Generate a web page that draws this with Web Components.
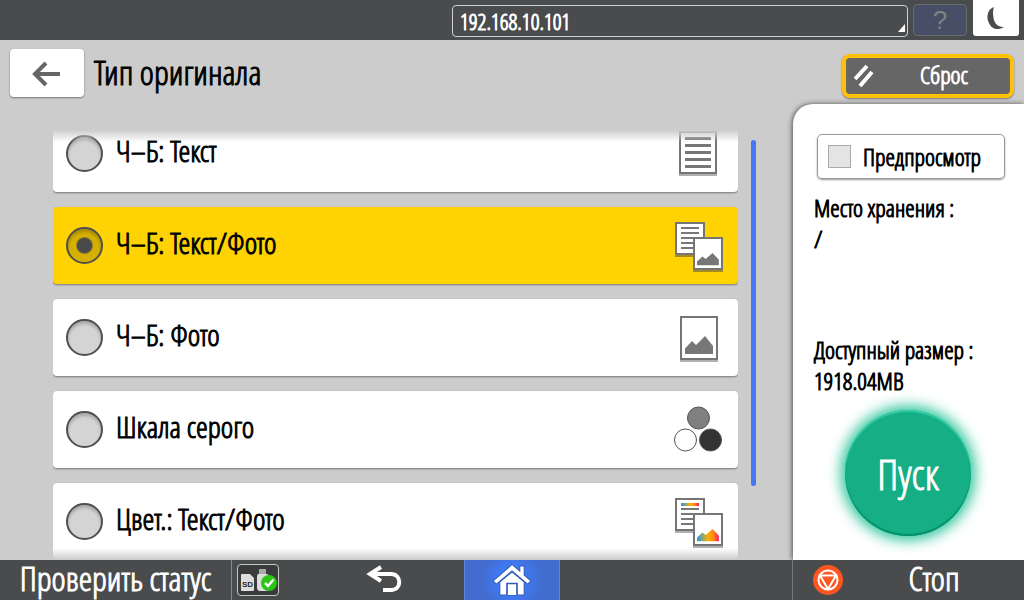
<!DOCTYPE html>
<html lang="ru">
<head>
<meta charset="utf-8">
<title>Тип оригинала</title>
<style>
  html, body { margin: 0; height: 100%; }
  body {
    --bar: #4a4b4d;
    --text-s: 24px;
    --text-m: 30px;
    --text-l: 34px;
    background: #ccc;
    color: #000;
    font-family: "Open Sans Condensed Light", "Open Sans Condensed", "Noto Sans", sans-serif;
    font-size: var(--text-s);
    -webkit-text-stroke: 1px currentColor;
    overflow: hidden;
  }
</style>
</head>
<body>
<scan-screen></scan-screen>

<template id="scan-screen">
  <style>
    :host { display: grid; grid-template-rows: 40px minmax(0, 1fr) 40px; height: 100vh; }
    .work { display: grid; grid-template-columns: minmax(0, 1fr) 231px; min-height: 0; }
    .main, .side { display: flex; flex-direction: column; min-height: 0; }
    original-list, job-panel { flex: 1; min-height: 0; }
  </style>
  <top-bar></top-bar>
  <div class="work">
    <main class="main">
      <page-title>Тип оригинала</page-title>
      <original-list></original-list>
    </main>
    <aside class="side">
      <reset-button>Сброс</reset-button>
      <job-panel></job-panel>
    </aside>
  </div>
  <bottom-bar></bottom-bar>
</template>

<template id="top-bar">
  <style>
    :host { display: flex; justify-content: flex-end; align-items: flex-start; gap: 5px; padding-right: 5px; background: var(--bar); }
    .address { position: relative; width: 456px; height: 32px; margin-top: 4px; }
    select {
      appearance: none; box-sizing: border-box; width: 100%; height: 100%; margin: 0; padding: 0 7px 4px;
      border: 1px solid #d0d0d0; border-radius: 4px; background: transparent; color: #fff;
      font-family: inherit; font-size: 22px;
    }
    option { color: #000; }
    .corner { position: absolute; right: 3px; bottom: 4px; width: 7px; height: 8px; background: #fff; clip-path: polygon(100% 0, 100% 100%, 0 100%); pointer-events: none; }
    button { box-sizing: border-box; padding: 0; font-family: inherit; }
    .help { width: 54px; height: 32px; margin-top: 4px; border: 1px solid #6a6c70; border-radius: 4px; background: #474f66; color: #808184; font-family: "Liberation Sans", sans-serif; font-size: 26px; line-height: 30px; -webkit-text-stroke: 0; }
    .sleep { width: 46px; height: 36px; margin-left: 1px; border: 0; border-radius: 0 0 3px 3px; background: #fff; }
    svg { display: block; margin: 0 auto; }
  </style>
  <div class="address">
    <select aria-label="Адрес"><option>192.168.10.101</option></select>
    <span class="corner"></span>
  </div>
  <button class="help" aria-label="Справка">?</button>
  <button class="sleep" aria-label="Сон"><svg width="46" height="36" viewBox="0 0 46 36"><path d="M21 7C15 9 13 16 15.500 22C18 29 24 31 31 27C25 27.500 21.500 23.500 20.500 18C19.800 13.500 19.800 10 21 7Z" fill="#4a4b4d"/></svg></button>
</template>

<template id="page-title">
  <style>
    :host { display: flex; align-items: flex-start; gap: 10px; box-sizing: border-box; height: 90px; padding: 9px 10px 0; }
    button { flex: none; width: 74px; height: 48px; padding: 0; border: 0; border-radius: 4px; background: #fff; box-shadow: 0 1px 2px #777; }
    h1 { margin: 0; font-size: var(--text-l); font-weight: normal; line-height: 46px; }
    svg { display: block; margin: 0 auto; }
  </style>
  <button aria-label="Назад"><svg width="74" height="48" viewBox="0 0 74 48" fill="none" stroke="#666" stroke-width="4"><path d="M50 25H26M36 14L25 25L36 36"/></svg></button>
  <h1><slot></slot></h1>
</template>

<template id="original-list">
  <style>
    :host { display: grid; grid-template-columns: minmax(0, 1fr) 6px; column-gap: 13px; padding: 0 36px 0 53px; }
    .frame { position: relative; min-height: 0; display: flex; }
    .frame::before, .frame::after { content: ""; position: absolute; left: 0; right: 0; height: 12px; pointer-events: none; z-index: 1; }
    .frame::before { top: 0; background: linear-gradient(#ccc, #cccccc00); }
    .frame::after { bottom: 0; background: linear-gradient(#cccccc00, #ccc); }
    .scroller { flex: 1; overflow-y: auto; scrollbar-width: none; display: flex; flex-direction: column; gap: 15px; }
    label { flex: none; display: flex; align-items: center; gap: 13px; box-sizing: border-box; height: 77px; padding: 0 11px 0 13px; border-radius: 4px; background: #fff; box-shadow: 0 1px 2px #777; font-size: var(--text-m); }
    label:has(:checked) { background: #ffd203; }
    label span { flex: 1; line-height: 36px; padding-bottom: 5px; }
    input { appearance: none; flex: none; box-sizing: border-box; width: 37px; height: 37px; margin: 0; border: 2px solid #4f4f4f; border-radius: 50%; background: #d4d4d4; box-shadow: inset 0 3px 3px #0003; }
    input:checked { background: radial-gradient(circle, #4a4a4a 7px, #d6b000 9px); }
    .thumb { margin: 10px 1px 74px 0; border-radius: 3px; background: #4478f5; }
  </style>
  <div class="frame">
    <div class="scroller" role="radiogroup" aria-label="Тип оригинала">
      <label><input type="radio" name="type"><span>Ч–Б: Текст</span><kind-icon kind="text"></kind-icon></label>
      <label><input type="radio" name="type" checked><span>Ч–Б: Текст/Фото</span><kind-icon kind="mixed"></kind-icon></label>
      <label><input type="radio" name="type"><span>Ч–Б: Фото</span><kind-icon kind="photo"></kind-icon></label>
      <label><input type="radio" name="type"><span>Шкала серого</span><kind-icon kind="gray"></kind-icon></label>
      <label><input type="radio" name="type"><span>Цвет.: Текст/Фото</span><kind-icon kind="color"></kind-icon></label>
    </div>
  </div>
  <div class="thumb"></div>
</template>

<template id="reset-button">
  <style>
    :host { display: block; padding: 14px 10px 6px 49px; }
    button { display: flex; align-items: center; box-sizing: border-box; width: 100%; height: 44px; padding: 0 8px; border: 4px solid #ffc107; border-radius: 8px; background: #666; box-shadow: 0 1px 2px #777; color: #fff; font-family: inherit; font-size: var(--text-s); line-height: 32px; }
    span { flex: 1; padding: 0 8px 2px 20px; }
  </style>
  <button><svg width="20" height="24" viewBox="0 0 20 24" stroke="#fff" stroke-width="4"><path d="M1 15L13 2M6 22L18 8"/></svg><span><slot></slot></span></button>
</template>

<template id="job-panel">
  <style>
    :host { display: flex; flex-direction: column; box-sizing: border-box; padding: 30px 19px 24px 21px; border-radius: 20px 0 0 0; background: #fff; box-shadow: -1px 0 5px #555; }
    label { display: flex; align-items: center; gap: 12px; box-sizing: border-box; height: 45px; margin-left: 3px; padding: 0 10px; border: 1px solid #999; border-radius: 5px; box-shadow: 0 1px 2px #999; }
    input { appearance: none; box-sizing: border-box; width: 23px; height: 23px; margin: 0; border: 1px solid #aaa; background: #e4e4e4; }
    dl { margin: 13px 0 0; line-height: 31px; }
    dd { margin: 0; }
    dd + dt { margin-top: 80px; }
    button { flex: none; width: 126px; height: 126px; margin: auto 0 0 31px; padding: 0; border: 0; border-radius: 50%; background: #15ae85; box-shadow: inset 0 2px 1px #36cba5, inset 0 -2px 1px #008e68, 0 0 14px 4px #26c397; color: #fff; font-family: inherit; font-size: 42px; }
  </style>
  <label><input type="checkbox">Предпросмотр</label>
  <dl>
    <dt>Место хранения :</dt><dd>/</dd>
    <dt>Доступный размер :</dt><dd>1918.04MB</dd>
  </dl>
  <button>Пуск</button>
</template>

<template id="bottom-bar">
  <style>
    :host { display: grid; grid-template-columns: 232px minmax(0, 1fr) 96px minmax(0, 1fr) 232px; background: var(--bar); }
    button { display: block; box-sizing: border-box; height: 40px; margin: 0; padding: 0; border: 0; background: none; color: #fff; font-family: inherit; font-size: var(--text-l); line-height: 36px; }
    svg { display: block; margin: 0 auto; }
    .status { padding-bottom: 4px; border-right: 1px solid #88898b; }
    .tools { display: flex; align-items: center; justify-content: space-between; padding-left: 5px; }
    .media { width: 42px; height: 32px; border: 1px solid #c8c8c8; border-radius: 4px; background: #393c3a; }
    .back { width: 160px; }
    .home { background: radial-gradient(circle, #3f7cff 20%, #426cce 60%); border: 1px solid #5f86dd; border-width: 0 1px; }
    .stop { grid-column: 5; display: flex; align-items: center; border-left: 1px solid #77787a; padding: 0 14px 0 19px; }
    .stop span { flex: 1; padding: 0 0 4px 14px; }
    .stop svg { margin: 0; }
  </style>
  <button class="status">Проверить статус</button>
  <div class="tools">
    <button class="media" aria-label="Носители"><svg width="40" height="30" viewBox="0 0 40 30">
      <path d="M4 9H12L16 13V25Q16 26 15 26H4Q3 26 3 25V10Q3 9 4 9Z" fill="#ddd"/>
      <text x="4" y="22" font-family="Liberation Sans, sans-serif" font-size="8" font-weight="bold" fill="#222" style="-webkit-text-stroke: 0">SD</text>
      <path d="M21 4H28V9H21Z" fill="#aaa"/><path d="M20 9H29Q32 10 32 13V22Q32 26 28 26H22Q19 26 19 22V12Q19 10 20 9Z" fill="#ddd"/>
      <circle cx="31" cy="18" r="8" fill="#29c414"/><path d="M27 18L30 21L35.500 14.500" fill="none" stroke="#fff" stroke-width="2.500"/>
    </svg></button>
    <button class="back" aria-label="Вернуться"><svg width="36" height="30" viewBox="0 0 36 30" fill="none" stroke="#fff" stroke-width="4"><path d="M4 9H25C36 9 36 25 25 25H17M15 2L4 9L15 16"/></svg></button>
  </div>
  <button class="home" aria-label="Домой"><svg width="40" height="34" viewBox="0 0 36 34" preserveAspectRatio="none">
    <path d="M7 19L18 9L29 19V32H7Z" fill="#fff" stroke="#305cba" stroke-width="1"/>
    <path d="M18 1.500L25 8V3H29V12L35 18L32 21L18 8L4 21L1 18Z" fill="#fff" stroke="#305cba" stroke-width="1"/>
    <path d="M13.500 32V20.500H22.500V32" fill="#fff" stroke="#305cba" stroke-width="1.500"/>
  </svg></button>
  <button class="stop"><svg width="32" height="32" viewBox="0 0 32 32"><circle cx="16" cy="16" r="15" fill="#fd5621"/><g fill="none" stroke="#fff" stroke-width="2"><circle cx="16" cy="16" r="9.500"/><path d="M8 11.500H24L16 25Z"/></g></svg><span>Стоп</span></button>
</template>

<script>
  function define(name) {
    customElements.define(name, class extends HTMLElement {
      constructor() {
        super();
        this.attachShadow({ mode: "open" }).append(document.getElementById(name).content.cloneNode(true));
      }
    });
  }

  const hill = "M0 18V12.500L7 5L11 9L20 0L28 10V18Z";
  const page = (x, y, w, h, shade = "#b0b0b0") =>
    `<rect x="${x}" y="${y + 2}" width="${w}" height="${h}" fill="${shade}"/><rect x="${x + 1}" y="${y + 1}" width="${w - 2}" height="${h - 2}" fill="#fff" stroke="#757575" stroke-width="2"/>`;
  const lines = (x, y, w, count, step, height) =>
    Array.from({ length: count }, (_, i) => `<rect x="${x}" y="${y + i * step}" width="${w}" height="${height}" fill="#777"/>`).join("");
  const pair = (fill, first, shade) => page(3, 2, 30, 33, shade) + lines(9, 7, 18, 5, 5, 2) + first
    + page(21, 17, 30, 33, shade) + `<path transform="translate(25 33) scale(.78 .68)" d="${hill}" fill="${fill}"/>`;
  const drawings = {
    text: page(7, 3, 38, 43) + lines(13, 9, 26, 5, 7, 3),
    mixed: pair("#777", "", "#a58c22"),
    photo: page(8, 4, 38, 44) + `<path transform="translate(13 24)" d="${hill}" fill="#777"/>`,
    gray: `<g stroke="#555"><circle cx="26.500" cy="14" r="11" fill="#7f807f"/><circle cx="13.500" cy="36" r="11" fill="#fff"/><circle cx="38.500" cy="36" r="11" fill="#333"/></g>`,
    color: `<linearGradient id="r"><stop stop-color="#1b9bea"/><stop offset=".5" stop-color="#fbb000"/><stop offset=".75" stop-color="#ff8a10"/><stop offset="1" stop-color="#ff1060"/></linearGradient>`
      + pair("url(#r)", `<rect x="9" y="7" width="18" height="3" fill="url(#r)"/>`)
  };
  customElements.define("kind-icon", class extends HTMLElement {
    connectedCallback() {
      if (this.shadowRoot) return;
      this.attachShadow({ mode: "open" }).innerHTML =
        `<style>:host { display: block; flex: none; } svg { display: block; }</style>
         <svg width="55" height="52" viewBox="0 0 55 52">${drawings[this.getAttribute("kind")]}</svg>`;
    }
  });

  ["top-bar", "page-title", "original-list", "reset-button", "job-panel", "bottom-bar", "scan-screen"].forEach(define);

  // Open the list at its last entry.
  const scroller = document.querySelector("scan-screen").shadowRoot
    .querySelector("original-list").shadowRoot.querySelector(".scroller");
  scroller.scrollTop = scroller.scrollHeight;
</script>
</body>
</html>
